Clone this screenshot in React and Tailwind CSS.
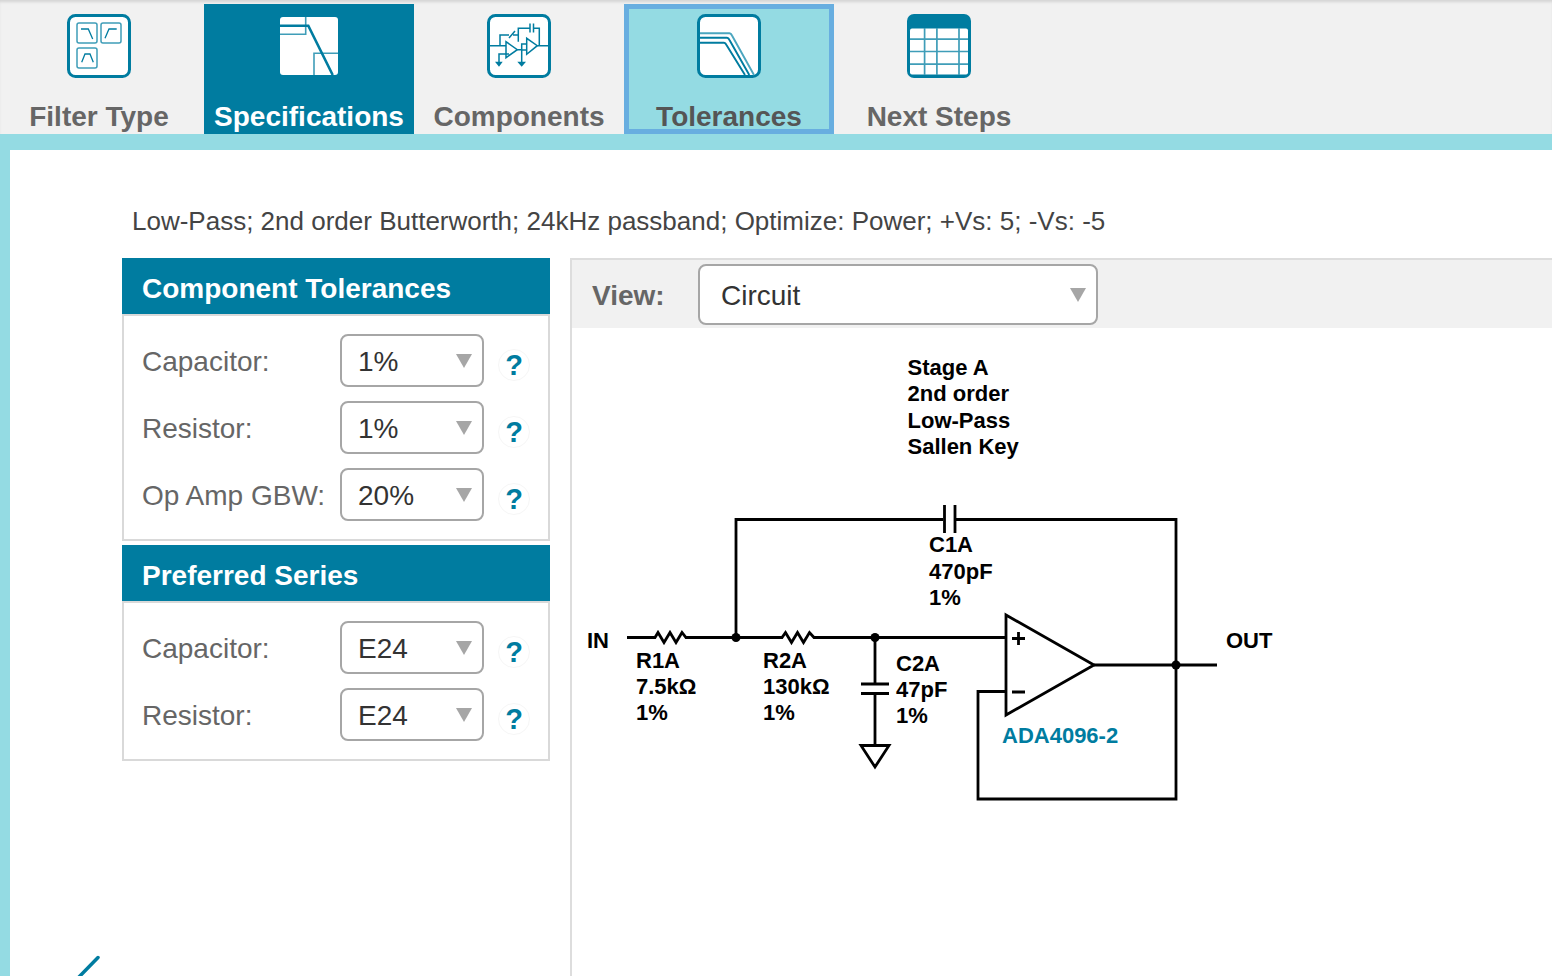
import React from "react";

const TEAL = "#007ca0";
const LIGHT = "#3f9db8";

function Frame({ children }) {
  return (
    <svg width="64" height="64" viewBox="0 0 64 64" fill="none" className="block shrink-0">
      {children}
    </svg>
  );
}

function FilterIcon() {
  return (
    <Frame>
      <rect x="1.5" y="1.5" width="61" height="61" rx="7" fill="#fff" stroke={TEAL} strokeWidth="3" />
      <g stroke={LIGHT} strokeWidth="1.5">
        <rect x="10" y="9" width="20" height="20" rx="2" />
        <rect x="34" y="9" width="20" height="20" rx="2" />
        <rect x="10" y="34" width="20" height="20" rx="2" />
      </g>
      <g stroke={TEAL} strokeWidth="1.3">
        <path d="M14 15H21.3L25.7 25" />
        <path d="M38 24.3L42 15H49.7" />
        <path d="M14.7 48.3L18 40H23L26.3 48.3" />
      </g>
    </Frame>
  );
}

function SpecIcon() {
  return (
    <Frame>
      <rect x="3" y="3" width="58" height="58" rx="3" fill="#fff" />
      <path d="M28.7 3V20.3H3M37 61V39.3H61" stroke={LIGHT} strokeWidth="1.6" />
      <path d="M3 11.7H31.3L55.7 61" stroke={TEAL} strokeWidth="2.6" />
    </Frame>
  );
}

function ComponentsIcon() {
  return (
    <Frame>
      <rect x="1.5" y="1.5" width="61" height="61" rx="7" fill="#fff" stroke={TEAL} strokeWidth="3" />
      <g stroke={TEAL} strokeWidth="1.5">
        <path d="M3 31.7H19M50.3 31.7H61" />
        <path d="M19 27.7V43.7L30.3 35.7Z" />
        <path d="M39.7 24.3V40.3L50.3 31.7Z" />
        <path d="M13 31.7V21H22M22 24L28 17M26 21H31.3" />
        <path d="M31.3 27.7V14.3H42.3M43 9.5V18.5M46.5 9.5V18.5M46.5 14.3H52.3V31.7" />
        <path d="M30.3 35.7H34.7V30H39.7M39.7 36H34.7V48" />
        <path d="M22 40H12V48" />
      </g>
      <path d="M8 47.7H15.7L12 52.7ZM30.3 47.7H39L34.7 52.7Z" fill={TEAL} />
    </Frame>
  );
}

function ToleranceIcon() {
  return (
    <Frame>
      <rect x="1.5" y="1.5" width="61" height="61" rx="7" fill="#fff" stroke={TEAL} strokeWidth="3" />
      <g strokeWidth="1.9">
        <path d="M3 19.3H32.5Q34 19.3 35 21.5L57 61" stroke="#4ba6bf" />
        <path d="M3 23.7H30Q31.5 23.7 32.5 26L52.3 61" stroke={TEAL} />
        <path d="M3 28.7H27Q28.5 28.7 29.5 31L48 61" stroke={TEAL} />
      </g>
    </Frame>
  );
}

function TableIcon() {
  return (
    <Frame>
      <rect x="0" y="0" width="64" height="64" rx="7" fill={TEAL} />
      <rect x="3" y="14.5" width="58" height="46" rx="2" fill="#fff" />
      <path d="M17.6 14V61M29.9 14V61M52 14V61M3 25.2H61M3 37.5H61M3 50.2H61" stroke={LIGHT} strokeWidth="1.7" />
    </Frame>
  );
}

function Tab({ label, icon, variant }) {
  const styles = {
    plain: "border-transparent text-[#666666]",
    active: "bg-[#007ca0] border-[#007ca0] text-white",
    selected: "bg-[#94dbe3] border-[#68aee0] text-[#555555]",
  };
  return (
    <div className={`w-[210px] h-[130px] border-[5px] box-border flex flex-col items-center pt-[5px] font-bold text-[28px] leading-[32px] ${styles[variant]}`}>
      {icon}
      <div className="mt-[23px] whitespace-nowrap">{label}</div>
    </div>
  );
}

function Select({ value, wide }) {
  return (
    <div className={`relative bg-white border-2 border-[#a6a6a6] box-border flex items-center pt-[2px] ${wide ? "w-[400px] h-[61px] rounded-[8px] pl-[21px]" : "w-[144px] h-[53px] rounded-[8px] pl-[16px]"} text-[28px] text-[#333333]`}>
      {value}
      <svg width="16" height="14" viewBox="0 0 16 14" className={`absolute ${wide ? "right-[10px] top-[22px]" : "right-[10px] top-[18px]"}`}>
        <path d="M0 0H16L8 14Z" fill="#a6a6a6" />
      </svg>
    </div>
  );
}

function Row({ label, value }) {
  return (
    <div className="flex items-center h-[53px]">
      <div className="w-[198px] pt-[2px] text-[28px] text-[#666666] whitespace-nowrap">{label}</div>
      <Select value={value} />
      <div className="ml-[14px] mt-[9px] w-[32px] h-[32px] rounded-full border border-[#f6f6f6] flex items-center justify-center text-[#007ca0] font-bold text-[29px] leading-none">?</div>
    </div>
  );
}

function Panel({ title, children }) {
  return (
    <div>
      <div className="h-[56px] bg-[#007ca0] text-white font-bold text-[28px] flex items-center pl-[20px] pt-[6px]">{title}</div>
      <div className="border-2 border-[#d9d9d9] px-[18px] py-[18px] flex flex-col gap-[14px]">{children}</div>
    </div>
  );
}

function Circuit() {
  const labels = [
    ["Stage A", 907.5, 375], ["2nd order", 907.5, 401], ["Low-Pass", 907.5, 428], ["Sallen Key", 907.5, 454],
    ["C1A", 929, 552], ["470pF", 929, 579], ["1%", 929, 605],
    ["IN", 587, 648],
    ["R1A", 636, 668], ["7.5kΩ", 636, 694], ["1%", 636, 720],
    ["R2A", 763, 668], ["130kΩ", 763, 694], ["1%", 763, 720],
    ["C2A", 896, 671], ["47pF", 896, 697], ["1%", 896, 723],
    ["OUT", 1226, 648],
  ];
  return (
    <svg width="980" height="648" viewBox="572 328 980 648" fill="none" className="block">
      <g stroke="#000" strokeWidth="2.8">
        <path d="M627 637.5H655L658 632.5L664 642.5L670 632.5L676 642.5L682 632.5L686 637.5H736M736 637.5V519.5H943M956 519.5H1176V799H978V691.5H1006" />
        <path d="M736 637.5H782L785.5 632.5L791.5 642.5L797.5 632.5L803.5 642.5L809.5 632.5L814 637.5H1006" />
        <path d="M944.5 505V533M955 505V533" />
        <path d="M875 637.5V684M861 684H889M861 693.5H889M875 693.5V745M861 745.5H889L875 767Z" />
        <path d="M1006 615L1094 665L1006 715Z" />
        <path d="M1094 665H1217" />
        <path d="M1012 638.5H1025M1018.5 632V645M1012 692H1025" />
      </g>
      <circle cx="736" cy="637.5" r="4.5" fill="#000" />
      <circle cx="875" cy="637.5" r="4.5" fill="#000" />
      <circle cx="1176" cy="665" r="4.5" fill="#000" />
      <g fill="#000" fontSize="22" fontWeight="700" fontFamily="'Liberation Sans', sans-serif">
        {labels.map(([t, x, y]) => (
          <text key={t + x + y} x={x} y={y}>{t}</text>
        ))}
      </g>
      <text x="1002" y="743" fill="#007ca0" fontSize="22" fontWeight="700" fontFamily="'Liberation Sans', sans-serif">ADA4096-2</text>
    </svg>
  );
}

export default function App() {
  return (
    <div className="relative h-[976px] w-full overflow-hidden bg-white font-['Liberation_Sans',Arial,sans-serif] flex flex-col">
      <div className="h-[134px] shrink-0 bg-[#f1f1f1] pt-[4px] pl-0 flex shadow-[inset_0_3px_3px_-1px_rgba(0,0,0,0.12)]">
        <div className="flex -ml-[6px]">
          <Tab label="Filter Type" icon={<FilterIcon />} variant="plain" />
          <Tab label="Specifications" icon={<SpecIcon />} variant="active" />
          <Tab label="Components" icon={<ComponentsIcon />} variant="plain" />
          <Tab label="Tolerances" icon={<ToleranceIcon />} variant="selected" />
          <Tab label="Next Steps" icon={<TableIcon />} variant="plain" />
        </div>
      </div>
      <div className="h-[16px] shrink-0 bg-[#94dbe3]" />
      <div className="flex-1 min-h-0 border-l-[10px] border-[#94dbe3] pl-[112px]">
        <div className="h-[108px] pt-[56px] text-[26px] leading-[30px] text-[#444444] pl-[10px] whitespace-nowrap">
          Low-Pass; 2nd order Butterworth; 24kHz passband; Optimize: Power; +Vs: 5; -Vs: -5
        </div>
        <div className="flex gap-[20px]">
          <div className="w-[428px] shrink-0 flex flex-col gap-[4px]">
            <Panel title="Component Tolerances">
              <Row label="Capacitor:" value="1%" />
              <Row label="Resistor:" value="1%" />
              <Row label="Op Amp GBW:" value="20%" />
            </Panel>
            <Panel title="Preferred Series">
              <Row label="Capacitor:" value="E24" />
              <Row label="Resistor:" value="E24" />
            </Panel>
          </div>
          <div className="flex-1 min-w-0 h-[718px] border-l-2 border-t-2 border-[#dddddd]">
            <div className="h-[68px] bg-[#f1f1f1] flex items-start pt-[4px] pl-[20px]">
              <div className="w-[106px] h-[61px] pt-[2px] flex items-center font-bold text-[28px] text-[#666666]">View:</div>
              <Select value="Circuit" wide />
            </div>
            <Circuit />
          </div>
        </div>
      </div>
      <svg width="30" height="30" viewBox="0 0 30 30" className="absolute left-[74px] top-[950px]">
        <path d="M24 7.5L3 29" stroke="#007ca0" strokeWidth="3.5" strokeLinecap="round" />
      </svg>
    </div>
  );
}
